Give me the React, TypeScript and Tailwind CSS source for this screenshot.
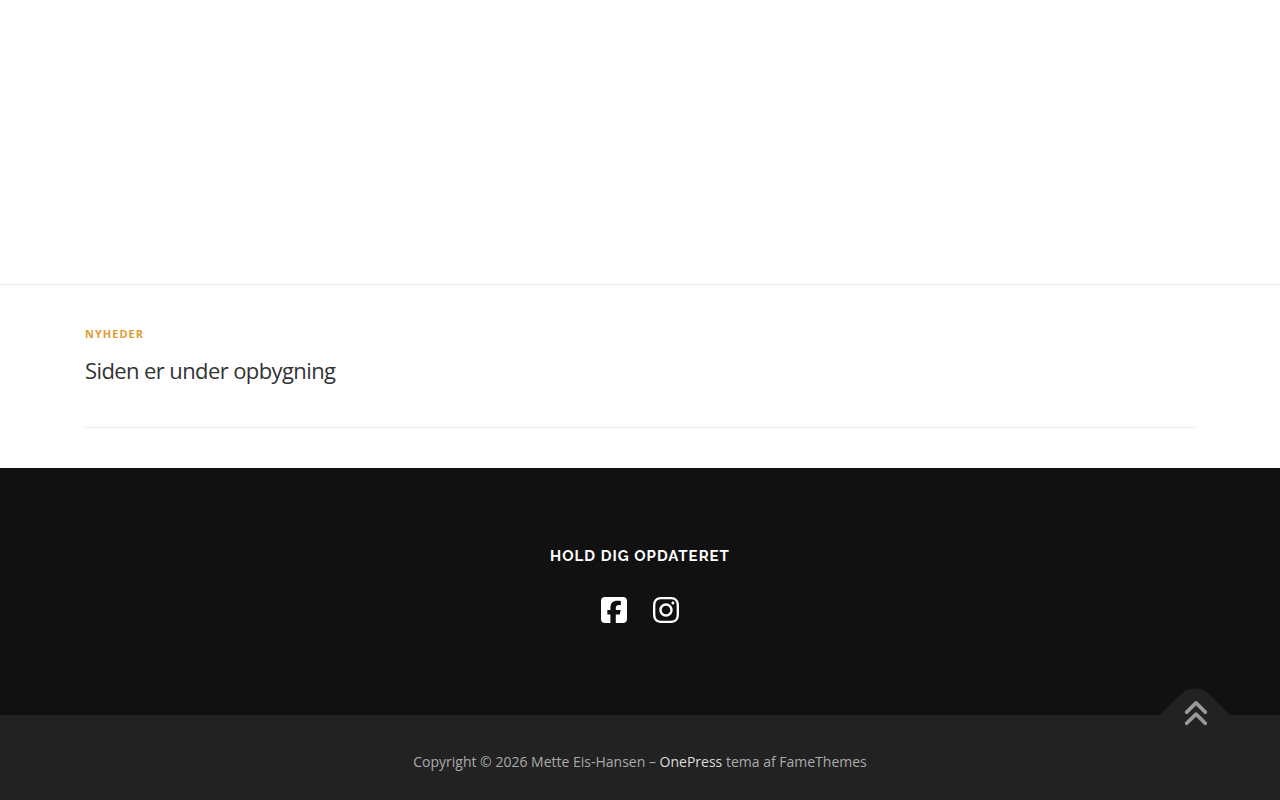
import type { ReactNode } from 'react'
import { FaAnglesUp, FaInstagram, FaSquareFacebook } from 'react-icons/fa6'

function SocialLink({ label, children }: { label: string; children: ReactNode }) {
  return (
    <a href="#" aria-label={label} className="text-3xl text-white hover:text-[#e19c33]">
      {children}
    </a>
  )
}

function NewsEntry({ category, title }: { category: string; title: string }) {
  return (
    <article className="border-b border-[#e9e9e9] pb-[42px]">
      <a
        href="#"
        className="block text-[11px] leading-[18px] font-bold tracking-[1px] text-[#e19c33] uppercase"
      >
        {category}
      </a>
      <h2 className="mt-3 text-[22px] leading-[30px] tracking-[-0.6px] text-[#333333]">
        <a href="#">{title}</a>
      </h2>
    </article>
  )
}

function BackToTop() {
  return (
    <a
      href="#"
      aria-label="Til toppen"
      className="absolute -top-7 right-[50px] flex h-14 w-[70px] justify-center text-[#999999]"
    >
      <svg viewBox="0 0 70 28" className="absolute top-0 left-0 h-7 w-[70px] fill-[#222222]" aria-hidden="true">
        <path d="M0 28 20.5 7.5A20.5 20.5 0 0 1 49.5 7.5L70 28Z" />
      </svg>
      <FaAnglesUp className="relative mt-3 ml-0.5 h-[30px] w-[26px]" />
    </a>
  )
}

export default function App() {
  return (
    <div className="bg-white font-['Open_Sans',sans-serif] text-sm">
      <header className="h-[285px] border-b border-[#e9e9e9]" />

      <main className="mx-auto max-w-[1140px] px-[15px] py-10">
        <NewsEntry category="Nyheder" title="Siden er under opbygning" />
      </main>

      <footer>
        <section className="flex flex-col items-center bg-[#111111] pt-[76px] pb-[90px]">
          <h5 className="font-['Raleway','Lato',sans-serif] text-[15px] leading-6 font-bold tracking-[1px] text-white uppercase">
            Hold dig opdateret
          </h5>
          <div className="mt-[27px] flex gap-[26px]">
            <SocialLink label="Facebook">
              <FaSquareFacebook className="h-[30px] w-[26px]" />
            </SocialLink>
            <SocialLink label="Instagram">
              <FaInstagram className="h-[30px] w-[26px]" />
            </SocialLink>
          </div>
        </section>

        <section className="relative bg-[#222222] px-4 pt-[35px] pb-[26px] text-center leading-6 text-[#aaaaaa]">
          <BackToTop />
          Copyright © 2026 Mette Eis-Hansen –{' '}
          <a href="#" className="text-[#dddddd]">
            OnePress
          </a>{' '}
          tema af FameThemes
        </section>
      </footer>
    </div>
  )
}
